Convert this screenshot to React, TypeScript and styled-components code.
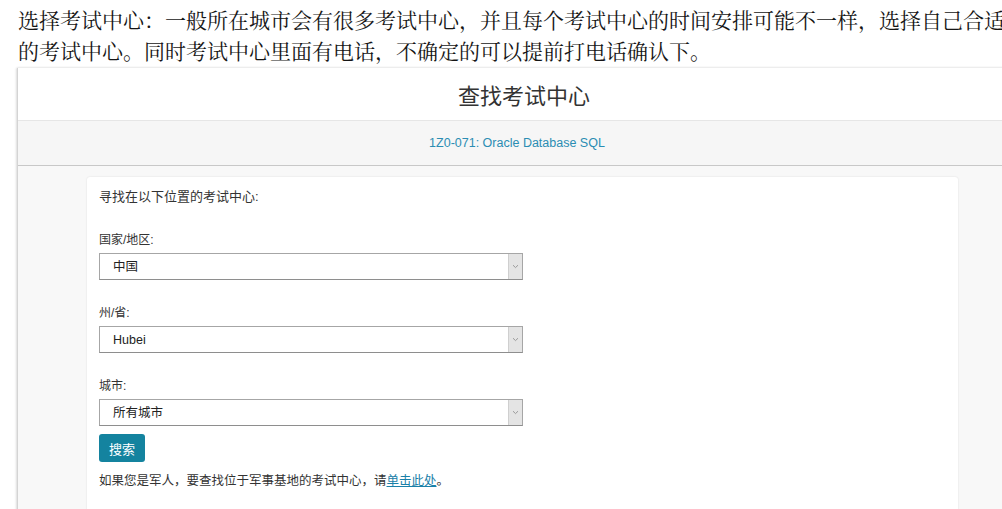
import React from "react";
import styled, { createGlobalStyle } from "styled-components";

const Global = createGlobalStyle`
  html, body { margin: 0; padding: 0; background: #fff; overflow: hidden; }
  body { width: 1002px; height: 509px; }
`;

const Page = styled.div`
  display: flex;
  flex-direction: column;
  width: 1002px;
  height: 509px;
  overflow: hidden;
`;

const Intro = styled.p`
  margin: 4px 0 0 18px;
  width: 990px;
  font-family: "Noto Serif CJK SC", "Liberation Serif", "Noto Sans CJK SC", serif;
  font-size: 21px;
  line-height: 31px;
  color: #151515;
`;

const Frame = styled.div`
  margin: 2px 0 0 17px;
  width: 1012px;
  flex: 1;
  display: flex;
  flex-direction: column;
  background: #f7f7f7;
  border-left: 1px solid #d4d4d4;
  box-shadow: -1px 0 2px rgba(0, 0, 0, 0.12), 0 -1px 2px rgba(0, 0, 0, 0.05);
`;

const Header = styled.div`
  height: 52px;
  display: flex;
  align-items: center;
  justify-content: center;
  background: #fff;
  font-family: "Liberation Sans", "Noto Sans CJK SC", sans-serif;
  font-size: 22px;
  color: #333;
`;

const ExamBand = styled.div`
  height: 44px;
  display: flex;
  align-items: center;
  justify-content: center;
  padding-right: 14px;
  background: #f6f6f6;
  border-top: 1px solid #e6e6e6;
  border-bottom: 1px solid #c8c8c8;
  font-family: "Liberation Sans", "Noto Sans CJK SC", sans-serif;
  font-size: 12.5px;
  color: #2b8db3;
`;

const Body = styled.div`
  flex: 1;
  padding: 11px 0 0 69px;
  background: #f8f8f8;
`;

const Card = styled.div`
  width: 847px;
  height: 400px;
  padding: 12px 12px 0 12px;
  background: #fff;
  border-radius: 3px;
  box-shadow: 0 0 2px rgba(0, 0, 0, 0.12);
  font-family: "Liberation Sans", "Noto Sans CJK SC", sans-serif;
  font-size: 12px;
  line-height: 16px;
  color: #333;
`;

const Lead = styled.div`
  margin-bottom: 27px;
  font-size: 13px;
`;

const Field = styled.div<{ $gap: number }>`
  display: flex;
  flex-direction: column;
  gap: 5px;
  margin-bottom: ${(p) => p.$gap}px;
`;

const Label = styled.div`
  color: #333;
`;

const SelectBox = styled.div`
  width: 424px;
  height: 27px;
  box-sizing: border-box;
  display: flex;
  align-items: stretch;
  border: 1px solid #a6a6a6;
  border-bottom-color: #8e8e8e;
  background: #fff;
`;

const SelectValue = styled.div`
  flex: 1;
  display: flex;
  align-items: center;
  padding-left: 13px;
  font-size: 12.5px;
  color: #222;
`;

const Arrow = styled.div`
  width: 13px;
  display: flex;
  align-items: center;
  justify-content: center;
  background: #e4e4e4;
  border-left: 1px solid #cfcfcf;
`;

const Button = styled.button`
  width: 46px;
  height: 28px;
  padding: 0;
  border: none;
  border-radius: 3px;
  background: #14839f;
  color: #fff;
  font-family: "Liberation Sans", "Noto Sans CJK SC", sans-serif;
  font-size: 13px;
`;

const Note = styled.div`
  margin-top: 11px;
  font-size: 12.5px;
`;

const Link = styled.a`
  color: #1a80a8;
  text-decoration: underline;
`;

function Select({ value }: { value: string }) {
  return (
    <SelectBox>
      <SelectValue>{value}</SelectValue>
      <Arrow>
        <svg width="7" height="5" viewBox="0 0 7 5">
          <path d="M1 1.2 L3.5 3.6 L6 1.2" fill="none" stroke="#9a9a9a" strokeWidth="1" />
        </svg>
      </Arrow>
    </SelectBox>
  );
}

export default function App() {
  return (
    <>
      <Global />
      <Page>
        <Intro>
          选择考试中心：一般所在城市会有很多考试中心，并且每个考试中心的时间安排可能不一样，选择自己合适的考试中心。同时考试中心里面有电话，不确定的可以提前打电话确认下。
        </Intro>
        <Frame>
          <Header>查找考试中心</Header>
          <ExamBand>1Z0-071: Oracle Database SQL</ExamBand>
          <Body>
            <Card>
              <Lead>寻找在以下位置的考试中心:</Lead>
              <Field $gap={25}>
                <Label>国家/地区:</Label>
                <Select value="中国" />
              </Field>
              <Field $gap={25}>
                <Label>州/省:</Label>
                <Select value="Hubei" />
              </Field>
              <Field $gap={8}>
                <Label>城市:</Label>
                <Select value="所有城市" />
              </Field>
              <Button>搜索</Button>
              <Note>
                如果您是军人，要查找位于军事基地的考试中心，请<Link href="#">单击此处</Link>。
              </Note>
            </Card>
          </Body>
        </Frame>
      </Page>
    </>
  );
}
